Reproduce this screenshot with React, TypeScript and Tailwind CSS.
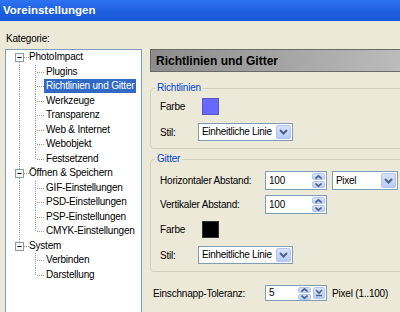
import React from "react";

const tree = [
  { label: "PhotoImpact", children: ["Plugins", "Richtlinien und Gitter", "Werkzeuge", "Transparenz", "Web & Internet", "Webobjekt", "Festsetzend"] },
  { label: "Öffnen & Speichern", children: ["GIF-Einstellungen", "PSD-Einstellungen", "PSP-Einstellungen", "CMYK-Einstellungen"] },
  { label: "System", children: ["Verbinden", "Darstellung"] },
];

const DOT = "#999999";

function TopGuide({ first, last }: { first: boolean; last: boolean }) {
  return (
    <svg width="23" height="14.5" viewBox="0 0 23 14.5" className="shrink-0">
      {!first && <line x1="13.5" y1="0" x2="13.5" y2="3" stroke={DOT} strokeDasharray="1 1" />}
      {!last && <line x1="13.5" y1="12" x2="13.5" y2="14.5" stroke={DOT} strokeDasharray="1 1" />}
      <line x1="18" y1="7.5" x2="23" y2="7.5" stroke={DOT} strokeDasharray="1 1" />
      <rect x="9.5" y="3.5" width="8" height="8" fill="#F4F4F0" stroke="#8A9AAA" />
      <line x1="11.5" y1="7.5" x2="15.5" y2="7.5" stroke="#000" />
    </svg>
  );
}

function ChildGuide({ parentLast, last }: { parentLast: boolean; last: boolean }) {
  return (
    <svg width="38" height="14.5" viewBox="0 0 38 14.5" className="shrink-0">
      {!parentLast && <line x1="13.5" y1="0" x2="13.5" y2="14.5" stroke={DOT} strokeDasharray="1 1" />}
      <line x1="29.5" y1="0" x2="29.5" y2={last ? 7.5 : 14.5} stroke={DOT} strokeDasharray="1 1" />
      <line x1="31" y1="7.5" x2="38" y2="7.5" stroke={DOT} strokeDasharray="1 1" />
    </svg>
  );
}

function Chevron({ up }: { up?: boolean }) {
  return (
    <svg width="7" height="4" viewBox="0 0 7 4">
      <path d={up ? "M0.5 3.5 L3.5 0.8 L6.5 3.5" : "M0.5 0.5 L3.5 3.2 L6.5 0.5"} fill="none" stroke="#4D6185" strokeWidth="1.6" />
    </svg>
  );
}

function DropBtn() {
  return (
    <div className="h-full w-[15px] shrink-0 rounded-[2px] border border-[#B3C6F1] bg-gradient-to-b from-[#D8E3FC] to-[#B6CBF6] flex items-center justify-center">
      <svg width="9" height="6" viewBox="0 0 9 6">
        <path d="M1 1 L4.5 4.5 L8 1" fill="none" stroke="#4D6185" strokeWidth="2" />
      </svg>
    </div>
  );
}

function SpinBtns() {
  return (
    <div className="h-full w-[13px] shrink-0 flex flex-col gap-[1px]">
      <div className="flex-1 rounded-[2px] border border-[#B3C6F1] bg-gradient-to-b from-[#D8E3FC] to-[#BCCEF6] flex items-center justify-center">
        <Chevron up />
      </div>
      <div className="flex-1 rounded-[2px] border border-[#B3C6F1] bg-gradient-to-b from-[#D8E3FC] to-[#BCCEF6] flex items-center justify-center">
        <Chevron />
      </div>
    </div>
  );
}

function Combo({ text, cls }: { text: string; cls: string }) {
  return (
    <div className={`flex items-center bg-white border border-[#7F9DB9] p-[1px] ${cls}`}>
      <span className="flex-1 pl-[2px] leading-none whitespace-nowrap overflow-hidden tracking-[-0.3px]">{text}</span>
      <DropBtn />
    </div>
  );
}

function Spin({ text, cls }: { text: string; cls: string }) {
  return (
    <div className={`flex items-center bg-white border border-[#7F9DB9] p-[1px] ${cls}`}>
      <span className="flex-1 pl-[2px] leading-none">{text}</span>
      <SpinBtns />
    </div>
  );
}

function Group({ title, cls, children }: { title: string; cls: string; children: React.ReactNode }) {
  return (
    <div className={`relative border border-[#D0D0BF] rounded-[4px] pl-[9px] flex flex-col ${cls}`}>
      <span className="absolute left-[4px] top-[-7px] px-[2px] bg-[#ECE9D8] text-[#0046D5] leading-[12px]">{title}</span>
      {children}
    </div>
  );
}

export default function App() {
  return (
    <div
      className="w-[400px] h-[312px] overflow-hidden bg-[#ECE9D8] text-black text-[10px] tracking-[-0.2px] flex flex-col"
      style={{ fontFamily: '"Liberation Sans", Arial, sans-serif' }}
    >
      <div className="h-[21px] shrink-0 flex items-center pl-[3px] bg-gradient-to-b from-[#2E74F2] via-[#1F60E2] to-[#1856D6]">
        <span className="text-white font-bold text-[11.5px] tracking-normal">Voreinstellungen</span>
      </div>
      <div className="h-[12px] mt-[12px] pl-[6px] leading-[12px] shrink-0">Kategorie:</div>
      <div className="flex mt-[4px] pl-[5px] gap-[8px]">
        <div className="w-[137px] h-[280px] shrink-0 bg-white border border-[#7F9DB9] flex flex-col">
          {tree.map((g, gi) => (
            <React.Fragment key={g.label}>
              <div className="flex items-center h-[14.5px]">
                <TopGuide first={gi === 0} last={gi === tree.length - 1} />
                <span className="leading-[14px] whitespace-nowrap">{g.label}</span>
              </div>
              {g.children.map((c, ci) => (
                <div key={c} className="flex items-center h-[14.5px]">
                  <ChildGuide parentLast={gi === tree.length - 1} last={ci === g.children.length - 1} />
                  <span
                    className={`h-[14px] leading-[14px] px-[2px] whitespace-nowrap ${
                      c === "Richtlinien und Gitter" ? "bg-[#316AC5] text-white" : ""
                    }`}
                  >
                    {c}
                  </span>
                </div>
              ))}
            </React.Fragment>
          ))}
        </div>
        <div className="flex flex-col w-[260px] shrink-0">
          <div className="h-[23px] border border-[#6A6A6A] bg-gradient-to-r from-[#8C8C8C] to-[#BDBDBD] flex items-center pl-[5px]">
            <span className="font-bold text-[12px] tracking-normal">Richtlinien und Gitter</span>
          </div>
          <Group title="Richtlinien" cls="mt-[16px] pt-[9px] pb-[7px]">
            <div className="flex items-center h-[17px]">
              <span className="w-[40px]">Farbe</span>
              <div className="ml-[2px] w-[17px] h-[17px] bg-[#6868FF] border border-[#5656D0]" />
            </div>
            <div className="flex items-center h-[18px] mt-[8px]">
              <span className="w-[38px]">Stil:</span>
              <Combo text="Einheitliche Linie" cls="w-[95px] h-[18px]" />
            </div>
          </Group>
          <Group title="Gitter" cls="mt-[10px] pt-[11px] pb-[7px]">
            <div className="flex items-center h-[19px]">
              <span className="w-[105px]">Horizontaler Abstand:</span>
              <Spin text="100" cls="w-[62px] h-[19px]" />
              <Combo text="Pixel" cls="ml-[5px] w-[66px] h-[19px]" />
            </div>
            <div className="flex items-center h-[19px] mt-[5px]">
              <span className="w-[105px]">Vertikaler Abstand:</span>
              <Spin text="100" cls="w-[62px] h-[19px]" />
            </div>
            <div className="flex items-center h-[17px] mt-[7px]">
              <span className="w-[40px]">Farbe</span>
              <div className="ml-[2px] w-[17px] h-[17px] bg-black border border-[#333]" />
            </div>
            <div className="flex items-center h-[18px] mt-[8px]">
              <span className="w-[38px]">Stil:</span>
              <Combo text="Einheitliche Linie" cls="w-[95px] h-[18px]" />
            </div>
          </Group>
          <div className="flex items-center h-[16px] mt-[13px] pl-[3px]">
            <span className="w-[112px]">Einschnapp-Toleranz:</span>
            <div className="flex items-center w-[62px] h-[16px] bg-white border border-[#7F9DB9] p-[1px] gap-[2px]">
              <span className="flex-1 pl-[2px] leading-none">5</span>
              <SpinBtns />
              <div className="h-full w-[12px] rounded-[2px] border border-[#B3C6F1] bg-gradient-to-b from-[#D8E3FC] to-[#B6CBF6] flex items-center justify-center">
                <svg width="8" height="8" viewBox="0 0 8 8">
                  <path d="M1 1 L4 4 L7 1" fill="none" stroke="#4D6185" strokeWidth="1.6" />
                  <line x1="1" y1="6.5" x2="7" y2="6.5" stroke="#4D6185" strokeWidth="1.4" />
                </svg>
              </div>
            </div>
            <span className="ml-[5px]">Pixel (1..100)</span>
          </div>
        </div>
      </div>
    </div>
  );
}
